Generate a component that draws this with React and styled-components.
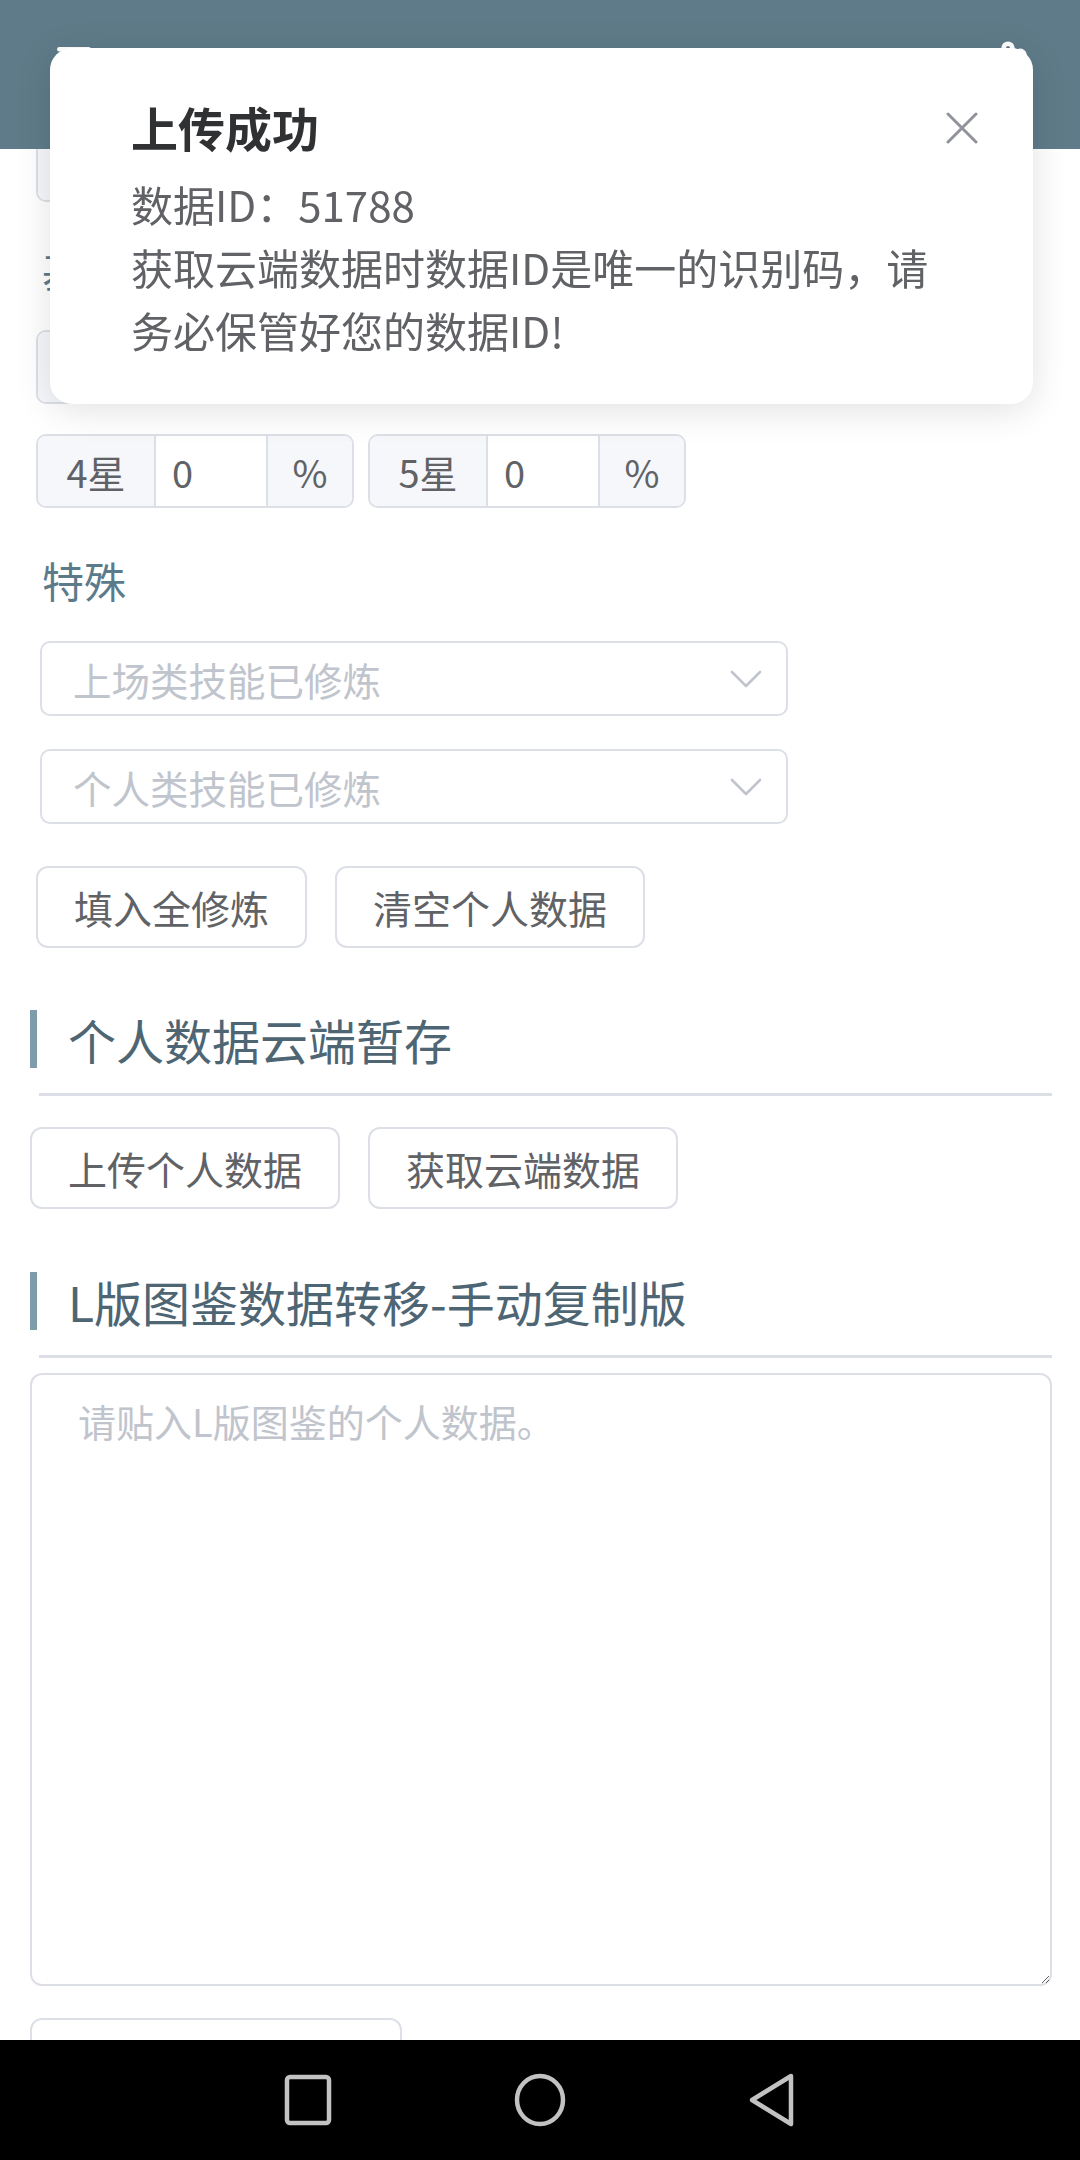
import styled, { createGlobalStyle } from 'styled-components';
import { Settings, Menu } from 'lucide-react';

const GlobalStyle = createGlobalStyle`
  html, body {
    margin: 0;
    padding: 0;
    background: #fff;
    font-family: "Noto Sans CJK SC", "Noto Sans", sans-serif;
    overflow: hidden;
  }
  * { box-sizing: border-box; }
`;

// rows that sit under the notification only show their left edge
const hiddenRows = [[1, 2, 3], [1, 2]];
const starRow = [{ label: '4星', value: '0' }, { label: '5星', value: '0' }];

function CloseIcon() {
  return (
    <svg width="32" height="32" viewBox="0 0 32 32">
      <path d="M2 2 L30 30 M30 2 L2 30" stroke="#909399" strokeWidth="3" strokeLinecap="round" fill="none" />
    </svg>
  );
}

function Chevron() {
  return (
    <svg width="32" height="18" viewBox="0 0 32 18">
      <path d="M2 2 L16 16 L30 2" stroke="#c0c4cc" strokeWidth="2.6" fill="none" strokeLinecap="round" strokeLinejoin="round" />
    </svg>
  );
}

function InputGroup({ label, value }) {
  return (
    <Group>
      <Addon $w={118} $first>{label}</Addon>
      <GroupInput readOnly defaultValue={value} />
      <Addon $w={86} $last>{label ? '%' : ''}</Addon>
    </Group>
  );
}

export default function App() {
  return (
    <>
      <GlobalStyle />
      <Header>
        <HeaderIcon><Menu size={44} color="#fff" strokeWidth={2.5} /></HeaderIcon>
        <HeaderIcon><Settings size={44} color="#fff" strokeWidth={2.5} /></HeaderIcon>
      </Header>

      <Content>
        <FormBlock>
          <GroupRow>
            {hiddenRows[0].map((k) => <InputGroup key={k} label="" value="" />)}
          </GroupRow>
          <FieldLabel $top={40}>基础</FieldLabel>
          <GroupRow $top={32}>
            {hiddenRows[1].map((k) => <InputGroup key={k} label="" value="" />)}
          </GroupRow>
          <GroupRow $top={30}>
            {starRow.map((g) => <InputGroup key={g.label} {...g} />)}
          </GroupRow>
          <FieldLabel $top={44}>特殊</FieldLabel>
          <Select>
            <span>上场类技能已修炼</span>
            <Chevron />
          </Select>
          <Select $top={33}>
            <span>个人类技能已修炼</span>
            <Chevron />
          </Select>
          <ButtonRow $top={42}>
            <Button>填入全修炼</Button>
            <Button>清空个人数据</Button>
          </ButtonRow>
        </FormBlock>

        <SectionTitle $top={62}>个人数据云端暂存</SectionTitle>
        <Divider />
        <ButtonRow $top={31}>
          <Button>上传个人数据</Button>
          <Button>获取云端数据</Button>
        </ButtonRow>

        <SectionTitle $top={63}>L版图鉴数据转移-手动复制版</SectionTitle>
        <Divider />
        <TextArea placeholder="请贴入L版图鉴的个人数据。" />
        <ButtonRow $top={32}>
          <Button $wide>导入L版图鉴数据</Button>
        </ButtonRow>
      </Content>

      <Toast>
        <ToastBody>
          <ToastTitle>上传成功</ToastTitle>
          <ToastText>
            <p>数据ID：51788</p>
            <p>获取云端数据时数据ID是唯一的识别码，请务必保管好您的数据ID!</p>
          </ToastText>
        </ToastBody>
        <CloseButton><CloseIcon /></CloseButton>
      </Toast>

      <NavBar>
        <svg width="50" height="52" viewBox="0 0 50 52">
          <rect x="4" y="3" width="42" height="46" rx="3" stroke="#c2c2c2" strokeWidth="4.5" fill="none" />
        </svg>
        <svg width="54" height="54" viewBox="0 0 54 54">
          <ellipse cx="27" cy="27" rx="23" ry="24" stroke="#c2c2c2" strokeWidth="4.5" fill="none" />
        </svg>
        <svg width="50" height="56" viewBox="0 0 50 56">
          <path d="M44 4 L5 28 L44 52 Z" stroke="#c2c2c2" strokeWidth="4.5" fill="none" strokeLinejoin="round" />
        </svg>
      </NavBar>
    </>
  );
}

const Header = styled.header`
  position: fixed;
  top: 0;
  left: 0;
  right: 0;
  height: 149px;
  background: #5f7b89;
  display: flex;
  justify-content: space-between;
  align-items: flex-start;
  padding: 40px 50px 0 52px;
  z-index: 5;
`;

const HeaderIcon = styled.div`
  width: 44px;
  height: 44px;
`;

const Content = styled.main`
  padding: 128px 28px 200px 30px;
  display: flex;
  flex-direction: column;
  align-items: flex-start;
`;

const FormBlock = styled.div`
  padding-left: 6px;
  display: flex;
  flex-direction: column;
  align-items: flex-start;
`;

const GroupRow = styled.div`
  display: flex;
  gap: 14px;
  margin-top: ${(p) => p.$top || 0}px;
`;

const Group = styled.div`
  display: flex;
  height: 74px;
  border: 2px solid #dcdfe6;
  border-radius: 10px;
  overflow: hidden;
`;

const Addon = styled.div`
  width: ${(p) => p.$w}px;
  background: #f5f7fa;
  color: #606266;
  font-size: 38px;
  display: flex;
  align-items: center;
  justify-content: center;
  border-left: ${(p) => (p.$last ? '2px solid #dcdfe6' : 'none')};
  border-right: ${(p) => (p.$first ? '2px solid #dcdfe6' : 'none')};
`;

const GroupInput = styled.input`
  width: 110px;
  border: none;
  outline: none;
  padding: 0 0 0 16px;
  font-family: inherit;
  font-size: 38px;
  color: #606266;
  background: #fff;
`;

const FieldLabel = styled.div`
  margin-top: ${(p) => p.$top || 0}px;
  padding-left: 6px;
  font-size: 42px;
  line-height: 56px;
  color: #5b7b8b;
`;

const Select = styled.div`
  margin-top: ${(p) => p.$top || 33}px;
  margin-left: 4px;
  width: 748px;
  height: 75px;
  border: 2px solid #dcdfe6;
  border-radius: 10px;
  display: flex;
  align-items: center;
  justify-content: space-between;
  padding: 0 24px 0 31px;
  font-size: 38.5px;
  color: #c0c4cc;
`;

const ButtonRow = styled.div`
  display: flex;
  gap: 28px;
  margin-top: ${(p) => p.$top || 0}px;
`;

const Button = styled.button`
  height: 82px;
  padding: 0 36px;
  min-width: ${(p) => (p.$wide ? '372px' : 'auto')};
  background: #fff;
  border: 2px solid #dcdfe6;
  border-radius: 12px;
  font-family: inherit;
  font-size: 39px;
  color: #606266;
  cursor: pointer;
`;

const SectionTitle = styled.h2`
  margin: ${(p) => p.$top}px 0 0;
  height: 58px;
  border-left: 7px solid #7f9cab;
  padding-left: 31px;
  font-size: 48px;
  line-height: 58px;
  font-weight: 400;
  color: #4e6573;
`;

const Divider = styled.hr`
  align-self: stretch;
  margin: 25px 0 0 9px;
  border: none;
  height: 3px;
  background: #dcdfe6;
`;

const TextArea = styled.textarea`
  align-self: stretch;
  margin-top: 15px;
  height: 613px;
  border: 2px solid #dcdfe6;
  border-radius: 12px;
  padding: 16px 46px;
  font-family: inherit;
  font-size: 38px;
  line-height: 60px;
  color: #606266;
  outline: none;
  &::placeholder {
    color: #c0c4cc;
  }
`;

const Toast = styled.div`
  position: fixed;
  top: 48px;
  left: 50px;
  width: 983px;
  background: #fff;
  border-radius: 22px;
  box-shadow: 0 6px 36px rgba(0, 0, 0, 0.12);
  padding: 47px 40px 43px 81px;
  display: flex;
  justify-content: space-between;
  align-items: flex-start;
  z-index: 10;
`;

const ToastBody = styled.div`
  width: 822px;
`;

const ToastTitle = styled.div`
  font-size: 47px;
  font-weight: 700;
  line-height: 64px;
  color: #303133;
`;

const ToastText = styled.div`
  margin-top: 13px;
  font-size: 42px;
  line-height: 63px;
  color: #606266;
  p {
    margin: 0;
  }
`;

const CloseButton = styled.div`
  margin-top: 17px;
  margin-right: 15px;
  width: 32px;
  height: 32px;
  display: flex;
`;

const NavBar = styled.nav`
  position: fixed;
  left: 0;
  right: 0;
  bottom: 0;
  height: 120px;
  background: #000;
  display: flex;
  align-items: center;
  justify-content: center;
  gap: 180px;
  z-index: 20;
`;
